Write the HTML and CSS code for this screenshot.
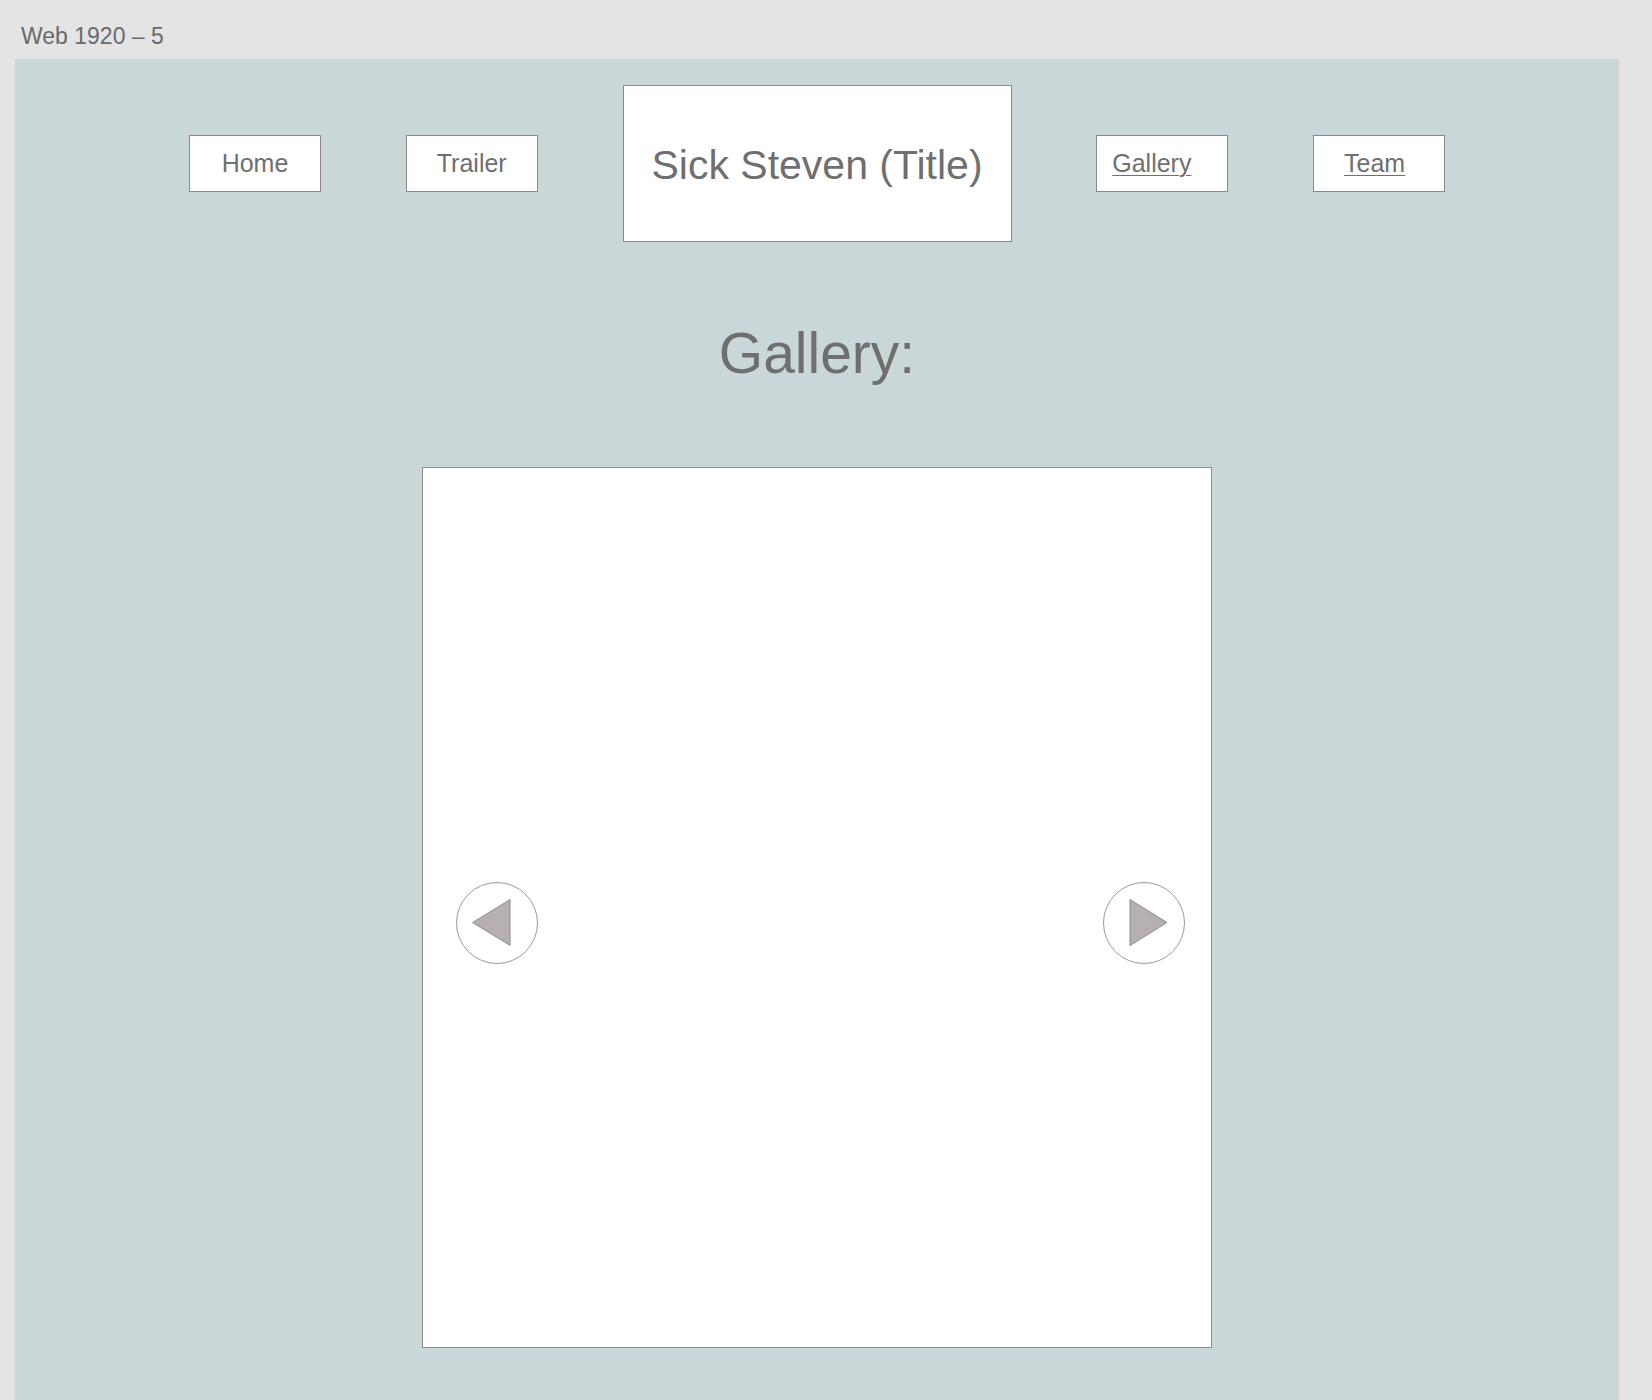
FILE: index.html
```html
<!DOCTYPE html>
<html>
<head>
<meta charset="utf-8">
<link rel="stylesheet" href="styles.css">
</head>
<body>
<div class="label">Web 1920 – 5</div>
<div class="artboard">
  <nav class="nav">
    <a class="btn">Home</a>
    <a class="btn">Trailer</a>
    <div class="title">Sick Steven (Title)</div>
    <a class="btn btn-link btn-gallery">Gallery</a>
    <a class="btn btn-link btn-team">Team</a>
  </nav>
  <h1 class="heading">Gallery:</h1>
  <div class="viewer">
    <div class="arrow arrow-left">
      <svg width="81" height="81" viewBox="0 0 81 81"><polygon points="16.6,40.5 54,17.6 54,63.4" fill="#b6b0b0" stroke="#8c8c8c" stroke-width="1"/></svg>
    </div>
    <div class="arrow arrow-right">
      <svg width="81" height="81" viewBox="0 0 81 81"><polygon points="27,17.6 27,63.6 64,40.5" fill="#b6b0b0" stroke="#8c8c8c" stroke-width="1"/></svg>
    </div>
  </div>
</div>
</body>
</html>
```
FILE: styles.css
```css
html, body {
  margin: 0;
  padding: 0;
}
body {
  background: #e4e4e4;
  font-family: "Liberation Sans", Arial, sans-serif;
  color: #6f6f6f;
  overflow: hidden;
  height: 1400px;
}
.label {
  font-size: 23px;
  line-height: 1;
  padding: 25px 0 0 21px;
  height: 34px;
  box-sizing: border-box;
  height: 59px;
  color: #6a6a6a;
}
.artboard {
  margin-left: 15px;
  width: 1602px;
  height: 1360px;
  background: #c9d7d8;
  border: 1px solid #d3d3d3;
  box-sizing: content-box;
}
.nav {
  display: flex;
  justify-content: center;
  align-items: center;
  gap: 84.75px;
  padding-top: 25px;
}
.btn {
  width: 132px;
  height: 57px;
  box-sizing: border-box;
  border: 1px solid #8a8a8a;
  background: #fff;
  display: flex;
  align-items: center;
  justify-content: center;
  font-size: 25px;
  line-height: 1;
  color: #6f6f6f;
}
.btn-link {
  justify-content: flex-start;
  text-decoration: underline;
  text-decoration-thickness: 1px;
  text-underline-offset: 3px;
}
.btn-gallery {
  padding-left: 15px;
}
.btn-team {
  padding-left: 30px;
}
.title {
  width: 389px;
  height: 157px;
  box-sizing: border-box;
  border: 1px solid #8a8a8a;
  background: #fff;
  display: flex;
  align-items: center;
  justify-content: center;
  font-size: 41px;
  line-height: 1;
  padding-top: 3px;
  color: #6f6f6f;
}
.heading {
  margin: 83px 0 0 0;
  text-align: center;
  font-weight: normal;
  font-size: 57px;
  line-height: 1;
  color: #6f6f6f;
}
.viewer {
  position: relative;
  width: 790px;
  height: 881px;
  box-sizing: border-box;
  margin: 85px auto 0;
  border: 1px solid #8c8c8c;
  background: #fff;
}
.arrow {
  position: absolute;
  top: 414px;
  width: 82px;
  height: 82px;
  box-sizing: border-box;
  border: 1px solid #9a9a9a;
  border-radius: 50%;
  background: #fff;
}
.arrow svg {
  position: absolute;
  left: -1px;
  top: -1px;
  display: block;
}
.arrow-left {
  left: 33px;
}
.arrow-right {
  right: 26px;
}
```
